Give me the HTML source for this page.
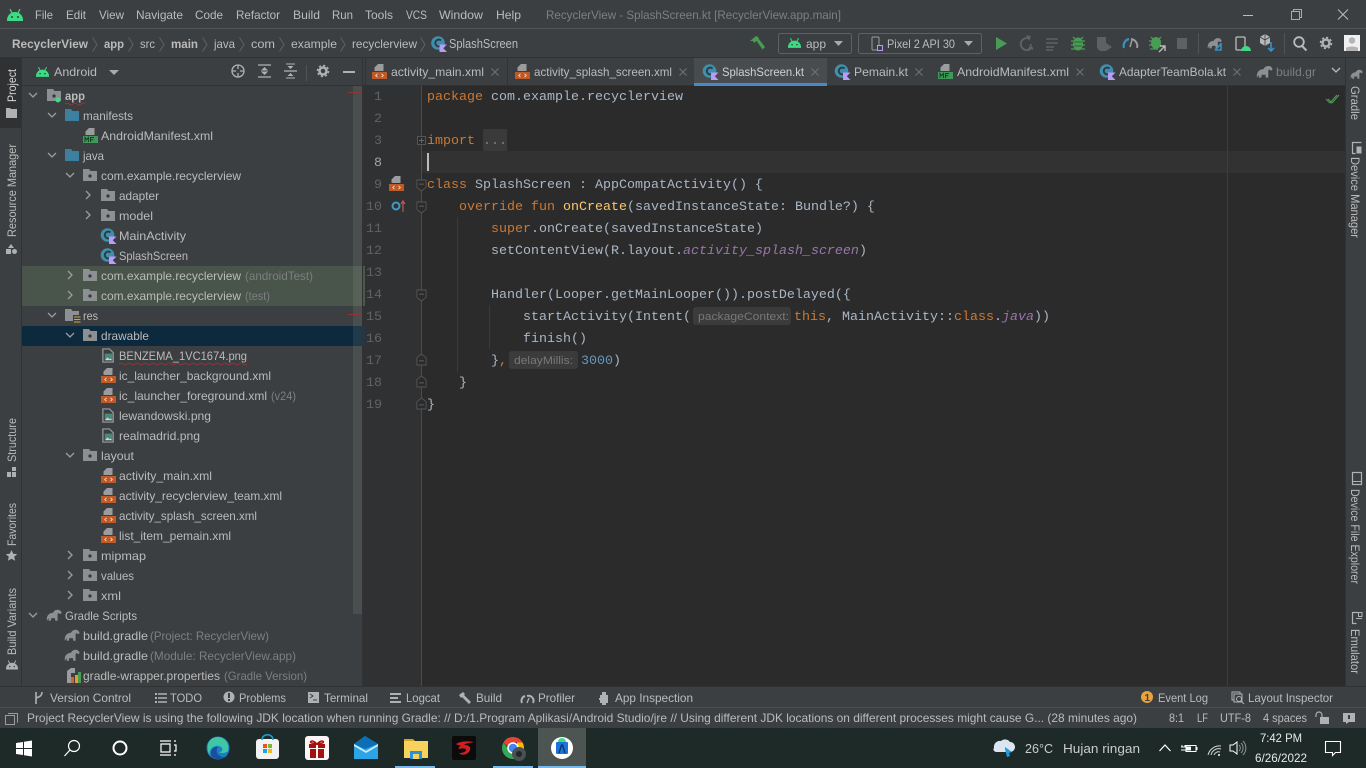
<!DOCTYPE html>
<html><head><meta charset="utf-8"><title>RecyclerView</title>
<style>
html,body{margin:0;padding:0;background:#3c3f41;overflow:hidden}
svg{display:block;position:absolute;left:0;top:0}
text{font-family:"Liberation Sans",sans-serif;font-size:12px;fill:#bbbbbb;white-space:pre}
.b{font-weight:bold}
.g{fill:#7d7f81}
.m{font-family:"Liberation Mono",monospace;font-size:13.333px;fill:#a9b7c6}
.k{fill:#cc7832}.f{fill:#ffc66d}.n{fill:#6897bb}.p{fill:#9876aa;font-style:italic}
.ln{font-family:"Liberation Mono",monospace;font-size:13.333px;fill:#606366;text-anchor:end}
.h{font-size:11px;fill:#787878}
.w{fill:#e4e6e6}
</style></head><body>
<svg width="1366" height="768" viewBox="0 0 1366 768" xmlns="http://www.w3.org/2000/svg">
<defs>
<symbol id="droid" viewBox="0 0 16 12"><path d="M0 11a8 8 0 0 1 16 0v1H0z" fill="currentColor"/><path d="M3 0l2 4M13 0l-2 4" stroke="currentColor" stroke-width="1.200"/><circle cx="5" cy="8" r="1" fill="#3c3f41"/><circle cx="11" cy="8" r="1" fill="#3c3f41"/></symbol>
<symbol id="kt" viewBox="0 0 16 16"><circle cx="7" cy="7" r="6.800" fill="#3f8fae"/><path d="M10 4.500A3.400 3.400 0 1 0 10 9.500" fill="none" stroke="#2f3a40" stroke-width="1.900"/><path d="M8.500 8.500H16l-3.700 3.700L16 16H8.500z" fill="#b99bf8"/></symbol>
<symbol id="pk" viewBox="0 0 14 12"><path d="M0 0h6l1.500 2H14v10H0z" fill="#8c9093"/><circle cx="7" cy="7" r="1.600" fill="#35383a"/></symbol>
<symbol id="bf" viewBox="0 0 14 12"><path d="M0 0h6l1.500 2H14v10H0z" fill="#3d7f9e"/></symbol>
<symbol id="xml" viewBox="0 0 15 15"><path d="M6 0h5.500v7H2.500V3.500z" fill="#9a9c9e"/><rect x="0" y="8" width="15" height="7" fill="#bf5a27"/><path d="M5.500 9.800l-1.800 1.700 1.800 1.700M9.500 9.800l1.800 1.700-1.800 1.700" fill="none" stroke="#e8d8cc" stroke-width=".9"/></symbol>
<symbol id="mf" viewBox="0 0 15 15"><path d="M6 0h5.500v7H2.500V3.500z" fill="#9a9c9e"/><rect x="0" y="8" width="15" height="7" fill="#3f9a5a"/><path d="M2 14v-4.500l1.700 2.200 1.700-2.200V14M7.500 14V9.500h3.500M7.500 11.800h2.800" fill="none" stroke="#1f3b28" stroke-width="1"/></symbol>
<symbol id="img" viewBox="0 0 16 16"><path d="M2 1h7l4 4v10H2z" fill="none" stroke="#9a9c9e" stroke-width="1.300"/><rect x="4" y="6" width="8" height="7" fill="#4a8a78"/><path d="M4 13l3-3 2 2 1-1 2 2z" fill="#c7d9d0"/></symbol>
<symbol id="gr" viewBox="0 0 18 13"><path d="M1 13C0 7 4 4 8 4c1-3 5-4 7-3 2 1 3 3 2 4-1 1-2 0-2.500-.5C13 4 13 6 13 8v5h-2.500L10 10H6l-.5 3H3v-3z" fill="#8c9093"/></symbol>
<symbol id="res" viewBox="0 0 16 16"><path d="M0 0h6l1.500 2H14v9H8v1H0z" fill="#8c9093"/><rect x="8" y="6" width="8" height="9" fill="#3c3f41"/><path d="M9 8h6.500M9 10.500h6.500M9 13h6.500" stroke="#e0a030" stroke-width="1.100"/></symbol>
<symbol id="fold" viewBox="0 0 12 14"><path d="M1 1h10v8l-5 4-5-4z" fill="#2b2b2b" stroke="#555" stroke-width="1"/><path d="M3.500 5.500h5" stroke="#666" stroke-width="1"/></symbol>
<symbol id="foldu" viewBox="0 0 12 14"><path d="M1 13h10V5L6 1 1 5z" fill="#2b2b2b" stroke="#555" stroke-width="1"/><path d="M3.500 8.500h5" stroke="#666" stroke-width="1"/></symbol>
<symbol id="cd" viewBox="0 0 10 10"><path d="M1 3l4 4 4-4" fill="none" stroke="#9a9d9f" stroke-width="1.300"/></symbol>
<symbol id="cr" viewBox="0 0 10 10"><path d="M3 1l4 4-4 4" fill="none" stroke="#9a9d9f" stroke-width="1.300"/></symbol>
<symbol id="x" viewBox="0 0 10 10"><path d="M1.500 1.500l7 7M8.500 1.500l-7 7" stroke="#6e7072" stroke-width="1.100"/></symbol>
<symbol id="sep" viewBox="0 0 6 15"><path d="M.5.500l4.500 7-4.500 7" fill="none" stroke="#5f6264" stroke-width="1"/></symbol>
</defs>

<!-- base -->
<rect width="1366" height="768" fill="#3c3f41"/>
<rect x="0" y="28" width="1366" height="1" fill="#515355"/>
<rect x="0" y="57" width="1366" height="1" fill="#323232"/>

<!-- title bar -->
<g color="#3ddc84"><use href="#droid" x="7" y="9" width="16" height="12"/></g>
<text x="35" y="19" textLength="18" lengthAdjust="spacingAndGlyphs">File</text>
<text x="66" y="19" textLength="20" lengthAdjust="spacingAndGlyphs">Edit</text>
<text x="99" y="19" textLength="25" lengthAdjust="spacingAndGlyphs">View</text>
<text x="136" y="19" textLength="47" lengthAdjust="spacingAndGlyphs">Navigate</text>
<text x="195" y="19" textLength="28" lengthAdjust="spacingAndGlyphs">Code</text>
<text x="236" y="19" textLength="44" lengthAdjust="spacingAndGlyphs">Refactor</text>
<text x="293" y="19" textLength="27" lengthAdjust="spacingAndGlyphs">Build</text>
<text x="332" y="19" textLength="21" lengthAdjust="spacingAndGlyphs">Run</text>
<text x="365" y="19" textLength="28" lengthAdjust="spacingAndGlyphs">Tools</text>
<text x="406" y="19" textLength="21" lengthAdjust="spacingAndGlyphs">VCS</text>
<text x="439" y="19" textLength="44" lengthAdjust="spacingAndGlyphs">Window</text>
<text x="496" y="19" textLength="25" lengthAdjust="spacingAndGlyphs">Help</text>
<text x="546" y="19" textLength="295" lengthAdjust="spacingAndGlyphs" class="g">RecyclerView - SplashScreen.kt [RecyclerView.app.main]</text>
<rect x="1243" y="15" width="10" height="1" fill="#bbb"/>
<path d="M1291.500 11.500h8v8h-8zM1293.500 11.500v-2h8v8h-2" fill="none" stroke="#aaa"/>
<path d="M1338 9.500l10 10M1348 9.500l-10 10" stroke="#bbb" stroke-width="1"/>

<!-- breadcrumb -->
<text x="12" y="48" class="b" textLength="76" lengthAdjust="spacingAndGlyphs">RecyclerView</text>
<use href="#sep" x="92" y="37" width="6" height="15"/>
<text x="104" y="48" class="b" textLength="20" lengthAdjust="spacingAndGlyphs">app</text>
<use href="#sep" x="128" y="37" width="6" height="15"/>
<text x="140" y="48" textLength="15" lengthAdjust="spacingAndGlyphs">src</text>
<use href="#sep" x="159" y="37" width="6" height="15"/>
<text x="171" y="48" class="b" textLength="27" lengthAdjust="spacingAndGlyphs">main</text>
<use href="#sep" x="202" y="37" width="6" height="15"/>
<text x="214" y="48" textLength="21" lengthAdjust="spacingAndGlyphs">java</text>
<use href="#sep" x="239" y="37" width="6" height="15"/>
<text x="251" y="48" textLength="24" lengthAdjust="spacingAndGlyphs">com</text>
<use href="#sep" x="279" y="37" width="6" height="15"/>
<text x="291" y="48" textLength="46" lengthAdjust="spacingAndGlyphs">example</text>
<use href="#sep" x="340" y="37" width="6" height="15"/>
<text x="352" y="48" textLength="65" lengthAdjust="spacingAndGlyphs">recyclerview</text>
<use href="#sep" x="420" y="37" width="6" height="15"/>
<use href="#kt" x="431" y="36" width="16" height="16"/>
<text x="449" y="48" textLength="69" lengthAdjust="spacingAndGlyphs" style="font-size:12.500px">SplashScreen</text>

<!-- toolbar -->
<path d="M750 41l6-5 2 1 1 2-5 4-1-2zM756 40l2-2 7 9-2.500 2.500z" fill="#499c54"/>
<rect x="778.500" y="33.500" width="73" height="20" rx="2" fill="none" stroke="#5e6163"/>
<g color="#3ddc84"><use href="#droid" x="788" y="38" width="13" height="10"/></g>
<text x="806" y="48" textLength="20" lengthAdjust="spacingAndGlyphs">app</text>
<path d="M834 41h9l-4.500 5z" fill="#aaa"/>
<rect x="858.500" y="33.500" width="123" height="20" rx="2" fill="none" stroke="#5e6163"/>
<rect x="872" y="37" width="7" height="13" rx="1" fill="none" stroke="#9a9c9e"/>
<rect x="877.500" y="45.500" width="5" height="5" fill="#3c3f41" stroke="#b99bf8"/>
<text x="887" y="48" textLength="68" lengthAdjust="spacingAndGlyphs">Pixel 2 API 30</text>
<path d="M964 41h9l-4.500 5z" fill="#aaa"/>
<path d="M996 37l11 6.500-11 6.500z" fill="#499c54"/>
<path d="M1030 39a6 6 0 1 0 2 8" fill="none" stroke="#5e6163" stroke-width="2"/><path d="M1026 35l5 1-2 5z" fill="#5e6163"/><text x="1028" y="50" style="font-size:8px;fill:#6a6d6f">A</text>
<path d="M1046 39h12M1046 43h12M1046 47h8M1046 50h7" stroke="#5e6163" stroke-width="1.500"/>
<ellipse cx="1078" cy="44" rx="5" ry="6.500" fill="#499c54"/><path d="M1073 37l2 2M1083 37l-2 2M1071 41h14M1071 45h14M1071 49h14" stroke="#499c54" stroke-width="1.300"/><path d="M1074 42h8M1074 46h8" stroke="#35603d" stroke-width="1"/>
<path d="M1097 37h9v14h-6l-3-3z" fill="#5e6163"/><path d="M1106 43l6 4-6 4z" fill="#5e6163"/>
<path d="M1124 48a7 7 0 0 1 5-9" fill="none" stroke="#3592c4" stroke-width="2.200"/><path d="M1131 39a7 7 0 0 1 6 9" fill="none" stroke="#9a9c9e" stroke-width="2"/><path d="M1130 47l2-7" stroke="#9a9c9e" stroke-width="1.500"/>
<ellipse cx="1156" cy="43" rx="5" ry="6" fill="#499c54"/><path d="M1151 37l2 2M1161 37l-2 2M1149 41h12M1149 45h12M1150 49h8" stroke="#499c54" stroke-width="1.300"/><path d="M1160 46h5v5M1165 46l-6 6" stroke="#bbb" stroke-width="1.400" fill="none"/>
<rect x="1177" y="38" width="10" height="11" fill="#5e6163"/>
<rect x="1198" y="33" width="1" height="21" fill="#515355"/>
<use href="#gr" x="1207" y="37" width="15" height="12"/><path d="M1221 43v7h-6M1215 50l6-6" stroke="#3592c4" stroke-width="1.600" fill="none"/>
<rect x="1236" y="37" width="9" height="13" rx="1" fill="none" stroke="#bbb" stroke-width="1.300"/><path d="M1241 51a5 5 0 0 1 10 0z" fill="#3ddc84"/>
<path d="M1260 37l5-3 5 3v6l-5 3-5-3z" fill="#b5b7b9"/><path d="M1265 34v12M1260 37l5 3 5-3" stroke="#3c3f41" stroke-width=".8" fill="none"/><path d="M1271 42v9M1268 48l3 3 3-3" stroke="#3592c4" stroke-width="1.600" fill="none"/>
<rect x="1284" y="33" width="1" height="21" fill="#515355"/>
<circle cx="1299" cy="42" r="4.800" fill="none" stroke="#bbb" stroke-width="1.800"/><path d="M1302 46l4.500 4.500" stroke="#bbb" stroke-width="2"/>
<circle cx="1326" cy="43" r="3.500" fill="none" stroke="#afb1b3" stroke-width="2.500"/><circle cx="1326" cy="43" r="5.500" fill="none" stroke="#afb1b3" stroke-width="1.500" stroke-dasharray="2.200 2.100"/>
<rect x="1344" y="35" width="16" height="16" fill="#f0f0f0"/><circle cx="1352" cy="40.500" r="3.200" fill="#b4b4b4"/><path d="M1346 51v-3c2-2 10-2 12 0v3z" fill="#b4b4b4"/>

<!-- left strip -->
<rect x="0" y="58" width="21" height="70" fill="#2f3132"/>
<rect x="21" y="58" width="1" height="628" fill="#323232"/>
<text transform="translate(16 102) rotate(-90)" textLength="33" lengthAdjust="spacingAndGlyphs" style="fill:#d8d8d8">Project</text>
<path d="M6 108h4l1 1h6v9H6z" fill="#afb1b3"/>
<text transform="translate(16 237) rotate(-90)" textLength="93" lengthAdjust="spacingAndGlyphs">Resource Manager</text>
<path d="M11 244l3 4H8zM6 249h5v5H6z" fill="#afb1b3"/><circle cx="14.500" cy="251.500" r="2.500" fill="#afb1b3"/>
<text transform="translate(16 462) rotate(-90)" textLength="44" lengthAdjust="spacingAndGlyphs">Structure</text>
<path d="M12 467h4v4h-4zM7 472h4v5H7zM12 472h4v5h-4z" fill="#afb1b3"/>
<text transform="translate(16 546) rotate(-90)" textLength="43" lengthAdjust="spacingAndGlyphs">Favorites</text>
<path d="M11.500 550l1.700 3.700 4 .4-3 2.700.9 4-3.600-2.100-3.600 2.100.9-4-3-2.700 4-.4z" fill="#afb1b3"/>
<text transform="translate(16 655) rotate(-90)" textLength="67" lengthAdjust="spacingAndGlyphs">Build Variants</text>
<g color="#afb1b3"><use href="#droid" x="6" y="660" width="12" height="10"/></g>

<!-- project panel header -->
<g color="#3ddc84"><use href="#droid" x="36" y="67" width="13" height="10"/></g>
<text x="54" y="76" textLength="43" lengthAdjust="spacingAndGlyphs">Android</text>
<path d="M109 70h10l-5 5z" fill="#aaa"/>
<circle cx="238" cy="71" r="6" fill="none" stroke="#afb1b3" stroke-width="1.300"/><path d="M238 65v12M232 71h12" stroke="#afb1b3" stroke-width="1.300"/><circle cx="238" cy="71" r="2" fill="#3c3f41"/>
<path d="M258 65h13M258 77h13" stroke="#afb1b3" stroke-width="1.300"/><path d="M264.500 67l-3 3h6zM264.500 75l-3-3h6z" fill="#afb1b3"/><path d="M261 71h7" stroke="#afb1b3"/>
<path d="M284 71h13" stroke="#afb1b3" stroke-width="1.300"/><path d="M290.500 69l-3-3h6zM290.500 73l-3 3h6z" fill="#afb1b3"/><path d="M286 78h9M286 64h9" stroke="#afb1b3" stroke-width="1"/>
<rect x="306" y="65" width="1" height="16" fill="#515355"/>
<circle cx="323" cy="71" r="3.500" fill="none" stroke="#afb1b3" stroke-width="2.500"/><circle cx="323" cy="71" r="5.500" fill="none" stroke="#afb1b3" stroke-width="1.500" stroke-dasharray="2.200 2.100"/>
<rect x="343" y="71" width="12" height="2" fill="#afb1b3"/>
<rect x="22" y="85" width="341" height="1" fill="#323232"/>

<!-- tree rows -->
<rect x="22" y="266" width="340" height="40" fill="#49544a"/>
<rect x="22" y="326" width="340" height="20" fill="#0d293e"/>
<rect x="353" y="86" width="9" height="528" fill="#fff" fill-opacity=".08"/>
<rect x="348" y="92" width="14" height="1" fill="#8a3737"/>
<rect x="348" y="314" width="14" height="1" fill="#8a3737"/>
<rect x="362" y="58" width="1" height="628" fill="#323232"/>

<use href="#cd" x="28" y="90" width="10" height="10"/>
<use href="#pk" x="47" y="89" width="14" height="12"/><circle cx="58" cy="100" r="2.500" fill="#3ddc84"/>
<text x="65" y="100" class="b" textLength="20" lengthAdjust="spacingAndGlyphs">app</text>
<path d="M65 104q2-2 4 0t4 0 4 0 4 0 4 0" stroke="#a33" fill="none" stroke-width=".8"/>
<use href="#cd" x="47" y="110" width="10" height="10"/><use href="#bf" x="65" y="109" width="14" height="12"/>
<text x="83" y="120" textLength="50" lengthAdjust="spacingAndGlyphs">manifests</text>
<use href="#mf" x="83" y="128" width="15" height="15"/>
<text x="101" y="140" textLength="112" lengthAdjust="spacingAndGlyphs">AndroidManifest.xml</text>
<use href="#cd" x="47" y="150" width="10" height="10"/><use href="#bf" x="65" y="149" width="14" height="12"/>
<text x="83" y="160" textLength="21" lengthAdjust="spacingAndGlyphs">java</text>
<use href="#cd" x="65" y="170" width="10" height="10"/><use href="#pk" x="83" y="169" width="14" height="12"/>
<text x="101" y="180" textLength="140" lengthAdjust="spacingAndGlyphs">com.example.recyclerview</text>
<use href="#cr" x="83" y="190" width="10" height="10"/><use href="#pk" x="101" y="189" width="14" height="12"/>
<text x="119" y="200" textLength="40" lengthAdjust="spacingAndGlyphs">adapter</text>
<use href="#cr" x="83" y="210" width="10" height="10"/><use href="#pk" x="101" y="209" width="14" height="12"/>
<text x="119" y="220" textLength="34" lengthAdjust="spacingAndGlyphs">model</text>
<use href="#kt" x="100.500" y="228" width="16" height="16"/>
<text x="119" y="240" textLength="67" lengthAdjust="spacingAndGlyphs">MainActivity</text>
<use href="#kt" x="100.500" y="248" width="16" height="16"/>
<text x="119" y="260" textLength="69" lengthAdjust="spacingAndGlyphs">SplashScreen</text>
<use href="#cr" x="65" y="270" width="10" height="10"/><use href="#pk" x="83" y="269" width="14" height="12"/>
<text x="101" y="280" textLength="140" lengthAdjust="spacingAndGlyphs">com.example.recyclerview</text>
<text x="245" y="280" class="g" textLength="68" lengthAdjust="spacingAndGlyphs">(androidTest)</text>
<use href="#cr" x="65" y="290" width="10" height="10"/><use href="#pk" x="83" y="289" width="14" height="12"/>
<text x="101" y="300" textLength="140" lengthAdjust="spacingAndGlyphs">com.example.recyclerview</text>
<text x="245" y="300" class="g" textLength="25" lengthAdjust="spacingAndGlyphs">(test)</text>
<use href="#cd" x="47" y="310" width="10" height="10"/><use href="#res" x="65" y="309" width="16" height="16"/>
<text x="83" y="320" textLength="15" lengthAdjust="spacingAndGlyphs">res</text>
<use href="#cd" x="65" y="330" width="10" height="10"/><use href="#pk" x="83" y="329" width="14" height="12"/>
<text x="101" y="340" textLength="48" lengthAdjust="spacingAndGlyphs">drawable</text>
<use href="#img" x="101" y="348" width="15" height="15"/>
<text x="119" y="360" textLength="128" lengthAdjust="spacingAndGlyphs">BENZEMA_1VC1674.png</text>
<path d="M119 364q2-2 4 0t4 0 4 0 4 0 4 0 4 0 4 0 4 0 4 0 4 0 4 0 4 0 4 0 4 0 4 0 4 0 4 0 4 0 4 0 4 0 4 0 4 0 4 0 4 0 4 0 4 0 4 0 4 0 4 0 4 0 4 0 4 0" stroke="#a33" fill="none" stroke-width=".7"/>
<use href="#xml" x="101" y="368" width="15" height="15"/>
<text x="119" y="380" textLength="152" lengthAdjust="spacingAndGlyphs">ic_launcher_background.xml</text>
<use href="#xml" x="101" y="388" width="15" height="15"/>
<text x="119" y="400" textLength="148" lengthAdjust="spacingAndGlyphs">ic_launcher_foreground.xml</text>
<text x="271" y="400" class="g" textLength="25" lengthAdjust="spacingAndGlyphs">(v24)</text>
<use href="#img" x="101" y="408" width="15" height="15"/>
<text x="119" y="420" textLength="92" lengthAdjust="spacingAndGlyphs">lewandowski.png</text>
<use href="#img" x="101" y="428" width="15" height="15"/>
<text x="119" y="440" textLength="81" lengthAdjust="spacingAndGlyphs">realmadrid.png</text>
<use href="#cd" x="65" y="450" width="10" height="10"/><use href="#pk" x="83" y="449" width="14" height="12"/>
<text x="101" y="460" textLength="33" lengthAdjust="spacingAndGlyphs">layout</text>
<use href="#xml" x="101" y="468" width="15" height="15"/>
<text x="119" y="480" textLength="93" lengthAdjust="spacingAndGlyphs">activity_main.xml</text>
<use href="#xml" x="101" y="488" width="15" height="15"/>
<text x="119" y="500" textLength="163" lengthAdjust="spacingAndGlyphs">activity_recyclerview_team.xml</text>
<use href="#xml" x="101" y="508" width="15" height="15"/>
<text x="119" y="520" textLength="138" lengthAdjust="spacingAndGlyphs">activity_splash_screen.xml</text>
<use href="#xml" x="101" y="528" width="15" height="15"/>
<text x="119" y="540" textLength="112" lengthAdjust="spacingAndGlyphs">list_item_pemain.xml</text>
<use href="#cr" x="65" y="550" width="10" height="10"/><use href="#pk" x="83" y="549" width="14" height="12"/>
<text x="101" y="560" textLength="45" lengthAdjust="spacingAndGlyphs">mipmap</text>
<use href="#cr" x="65" y="570" width="10" height="10"/><use href="#pk" x="83" y="569" width="14" height="12"/>
<text x="101" y="580" textLength="33" lengthAdjust="spacingAndGlyphs">values</text>
<use href="#cr" x="65" y="590" width="10" height="10"/><use href="#pk" x="83" y="589" width="14" height="12"/>
<text x="101" y="600" textLength="20" lengthAdjust="spacingAndGlyphs">xml</text>
<use href="#cd" x="28" y="610" width="10" height="10"/><use href="#gr" x="46" y="609" width="16" height="12"/>
<text x="65" y="620" textLength="72" lengthAdjust="spacingAndGlyphs">Gradle Scripts</text>
<use href="#gr" x="64" y="629" width="16" height="12"/>
<text x="83" y="640" textLength="65" lengthAdjust="spacingAndGlyphs">build.gradle</text>
<text x="150" y="640" class="g" textLength="119" lengthAdjust="spacingAndGlyphs">(Project: RecyclerView)</text>
<use href="#gr" x="64" y="649" width="16" height="12"/>
<text x="83" y="660" textLength="65" lengthAdjust="spacingAndGlyphs">build.gradle</text>
<text x="150" y="660" class="g" textLength="146" lengthAdjust="spacingAndGlyphs">(Module: RecyclerView.app)</text>
<path d="M71 668h4v5h-4zM67 671l4-3v3zM67 671h4v12h-4z" fill="#9a9c9e"/><rect x="71" y="677" width="3" height="6" fill="#d9642a"/><rect x="75" y="675" width="3" height="8" fill="#e0a030"/><rect x="78" y="672" width="3" height="11" fill="#499c54"/>
<text x="83" y="680" textLength="137" lengthAdjust="spacingAndGlyphs">gradle-wrapper.properties</text>
<text x="224" y="680" class="g" textLength="83" lengthAdjust="spacingAndGlyphs">(Gradle Version)</text>

<!-- editor tabs -->
<rect x="694" y="58" width="133" height="25" fill="#494c4e"/>
<rect x="694" y="83" width="133" height="3" fill="#4a88c7"/>
<use href="#xml" x="372" y="64" width="15" height="15"/>
<text x="391" y="76" textLength="93" lengthAdjust="spacingAndGlyphs">activity_main.xml</text>
<use href="#x" x="490" y="67" width="10" height="10"/>
<rect x="507" y="58" width="1" height="28" fill="#323232"/><rect x="365" y="58" width="1" height="28" fill="#323232"/>
<use href="#xml" x="515" y="64" width="15" height="15"/>
<text x="534" y="76" textLength="138" lengthAdjust="spacingAndGlyphs">activity_splash_screen.xml</text>
<use href="#x" x="678" y="67" width="10" height="10"/>
<use href="#kt" x="702.500" y="64" width="16" height="16"/>
<text x="722" y="76" textLength="82" lengthAdjust="spacingAndGlyphs" style="fill:#d0d0d0">SplashScreen.kt</text>
<use href="#x" x="810" y="67" width="10" height="10"/>
<use href="#kt" x="834.500" y="64" width="16" height="16"/>
<text x="854" y="76" textLength="54" lengthAdjust="spacingAndGlyphs">Pemain.kt</text>
<use href="#x" x="914" y="67" width="10" height="10"/>
<use href="#mf" x="938" y="64" width="15" height="15"/>
<text x="957" y="76" textLength="112" lengthAdjust="spacingAndGlyphs">AndroidManifest.xml</text>
<use href="#x" x="1075" y="67" width="10" height="10"/>
<use href="#kt" x="1099.500" y="64" width="16" height="16"/>
<text x="1119" y="76" textLength="107" lengthAdjust="spacingAndGlyphs">AdapterTeamBola.kt</text>
<use href="#x" x="1232" y="67" width="10" height="10"/>
<use href="#gr" x="1256" y="65" width="17" height="13"/>
<text x="1276" y="76" textLength="40" lengthAdjust="spacingAndGlyphs" class="g">build.gr</text>
<path d="M1332 68l4 4 4-4" fill="none" stroke="#bbb" stroke-width="1.300"/>
<rect x="363" y="85" width="331" height="1" fill="#323232"/><rect x="827" y="85" width="518" height="1" fill="#323232"/>

<!-- editor -->
<rect x="363" y="86" width="982" height="600" fill="#2b2b2b"/>
<rect x="363" y="86" width="58" height="600" fill="#2f3133"/>
<rect x="422" y="151" width="923" height="22" fill="#323232"/>
<rect x="421" y="86" width="1" height="600" fill="#4a4c4e"/>
<rect x="1227" y="86" width="1" height="600" fill="#3d3d3d"/>
<rect x="363" y="266" width="2" height="40" fill="#4a5a4a"/><rect x="363" y="326" width="2" height="20" fill="#1b3a52"/>
<rect x="457" y="217" width="1" height="155" fill="#3b3b3b"/>
<rect x="489" y="305" width="1" height="44" fill="#3b3b3b"/>
<path d="M1326 99l4 4 7-8M1328 99l4 4 7-8" fill="none" stroke="#499c54" stroke-width="1.100"/>

<text class="ln" x="382" y="100">1</text>
<text class="ln" x="382" y="122">2</text>
<text class="ln" x="382" y="144">3</text>
<text class="ln" x="382" y="166" style="fill:#a4a3a3">8</text>
<text class="ln" x="382" y="188">9</text>
<text class="ln" x="382" y="210">10</text>
<text class="ln" x="382" y="232">11</text>
<text class="ln" x="382" y="254">12</text>
<text class="ln" x="382" y="276">13</text>
<text class="ln" x="382" y="298">14</text>
<text class="ln" x="382" y="320">15</text>
<text class="ln" x="382" y="342">16</text>
<text class="ln" x="382" y="364">17</text>
<text class="ln" x="382" y="386">18</text>
<text class="ln" x="382" y="408">19</text>

<use href="#xml" x="389" y="176" width="15" height="15"/>
<circle cx="396" cy="206" r="3.500" fill="none" stroke="#3d9bc4" stroke-width="2"/><path d="M403 212v-10M401 204l2-3 2 3" stroke="#c75450" stroke-width="1.200" fill="none"/>

<path d="M417.500 136.500h8v8h-8z" fill="#2b2b2b" stroke="#555"/><path d="M419 140.500h5M421.500 138v5" stroke="#666"/>
<use href="#fold" x="416" y="179" width="11" height="13"/>
<use href="#fold" x="416" y="201" width="11" height="13"/>
<use href="#fold" x="416" y="289" width="11" height="13"/>
<use href="#foldu" x="416" y="353" width="11" height="13"/>
<use href="#foldu" x="416" y="375" width="11" height="13"/>
<use href="#foldu" x="416" y="397" width="11" height="13"/>

<text class="m" x="427" y="100"><tspan class="k">package</tspan> com.example.recyclerview</text>
<text class="m k" x="427" y="144" style="fill:#cc7832">import</text>
<rect x="483" y="129" width="24" height="22" fill="#3a3a3a"/>
<text class="m" x="483" y="144" style="fill:#808080">...</text>
<rect x="427" y="153" width="2" height="18" fill="#bbb"/>
<text class="m" x="427" y="188"><tspan class="k">class</tspan> SplashScreen : AppCompatActivity() {</text>
<text class="m" x="459" y="210"><tspan class="k">override fun</tspan> <tspan class="f">onCreate</tspan>(savedInstanceState: Bundle?) {</text>
<text class="m" x="491" y="232"><tspan class="k">super</tspan>.onCreate(savedInstanceState)</text>
<text class="m" x="491" y="254">setContentView(R.layout.<tspan class="p">activity_splash_screen</tspan>)</text>
<text class="m" x="491" y="298">Handler(Looper.getMainLooper()).postDelayed({</text>
<text class="m" x="523" y="320">startActivity(Intent(</text>
<rect x="693" y="307" width="98" height="18" rx="3" fill="#3b3b3b"/>
<text class="h" x="698" y="320" textLength="91" lengthAdjust="spacingAndGlyphs">packageContext:</text>
<text class="m" x="794" y="320"><tspan class="k">this</tspan>, MainActivity::<tspan class="k">class</tspan>.<tspan class="p">java</tspan>))</text>
<text class="m" x="523" y="342">finish()</text>
<text class="m" x="491" y="364">}<tspan class="k">,</tspan></text>
<rect x="509" y="351" width="69" height="18" rx="3" fill="#3b3b3b"/>
<text class="h" x="514" y="364" textLength="59" lengthAdjust="spacingAndGlyphs">delayMillis:</text>
<text class="m" x="581" y="364"><tspan class="n">3000</tspan>)</text>
<text class="m" x="459" y="386">}</text>
<text class="m" x="427" y="408">}</text>

<!-- right strip -->
<rect x="1345" y="58" width="1" height="628" fill="#323232"/>
<use href="#gr" x="1350" y="69" width="13" height="10"/>
<text transform="translate(1351 86) rotate(90)" textLength="34" lengthAdjust="spacingAndGlyphs">Gradle</text>
<path d="M1361.500 142.500h-9v11h3" fill="none" stroke="#afb1b3" stroke-width="1.200"/><rect x="1356.500" y="146.500" width="5" height="7" fill="#afb1b3"/>
<text transform="translate(1351 157) rotate(90)" textLength="81" lengthAdjust="spacingAndGlyphs">Device Manager</text>
<rect x="1352.500" y="472.500" width="9" height="12" fill="none" stroke="#afb1b3" stroke-width="1.200"/><rect x="1353" y="481" width="8" height="1" fill="#afb1b3"/>
<text transform="translate(1351 489) rotate(90)" textLength="95" lengthAdjust="spacingAndGlyphs">Device File Explorer</text>
<path d="M1358 612.500h-5.500v11h4" fill="none" stroke="#afb1b3" stroke-width="1.200"/><rect x="1358.500" y="612.500" width="3.500" height="4" fill="none" stroke="#afb1b3"/><rect x="1356" y="618" width="6" height="1" fill="#afb1b3"/>
<text transform="translate(1351 629) rotate(90)" textLength="45" lengthAdjust="spacingAndGlyphs">Emulator</text>

<!-- bottom tool windows -->
<rect x="0" y="686" width="1366" height="1" fill="#323232"/>
<rect x="0" y="707" width="1366" height="1" fill="#4b4d4f"/>
<path d="M36 692v12M42 692c0 4-3 5-6 6" fill="none" stroke="#afb1b3" stroke-width="1.600"/>
<text x="50" y="702" textLength="81" lengthAdjust="spacingAndGlyphs">Version Control</text>
<path d="M155 693h2v2h-2zM155 697h2v2h-2zM155 701h2v2h-2z" fill="#afb1b3"/><path d="M158 694h9M158 698h9M158 702h9" stroke="#afb1b3" stroke-width="1.600"/>
<text x="170" y="702" textLength="32" lengthAdjust="spacingAndGlyphs">TODO</text>
<circle cx="229" cy="697" r="5.500" fill="#afb1b3"/><rect x="228" y="693" width="2" height="5" fill="#3c3f41"/><rect x="228" y="699" width="2" height="2" fill="#3c3f41"/>
<text x="239" y="702" textLength="47" lengthAdjust="spacingAndGlyphs">Problems</text>
<rect x="308" y="692" width="11" height="11" fill="#afb1b3"/><path d="M310 694l3 2-3 2" fill="none" stroke="#3c3f41"/><path d="M313 700h4" stroke="#3c3f41"/>
<text x="324" y="702" textLength="44" lengthAdjust="spacingAndGlyphs">Terminal</text>
<path d="M390 693h11v2h-11zM390 697h8v2h-8zM390 701h11v2h-11z" fill="#afb1b3"/>
<text x="406" y="702" textLength="34" lengthAdjust="spacingAndGlyphs">Logcat</text>
<path d="M459 695l4-3 2 2-1 1 7 7-2 2-7-7-1 1z" fill="#afb1b3"/>
<text x="476" y="702" textLength="26" lengthAdjust="spacingAndGlyphs">Build</text>
<path d="M522 703a5 5 0 0 1 3-7" fill="none" stroke="#afb1b3" stroke-width="2"/><path d="M527 696a5 5 0 0 1 6 7" fill="none" stroke="#afb1b3" stroke-width="2"/><path d="M527 703l2-5" stroke="#afb1b3" stroke-width="1.300"/>
<text x="538" y="702" textLength="37" lengthAdjust="spacingAndGlyphs">Profiler</text>
<path d="M602 692h4v3h2v8h-2v2h-4v-2h-2v-3h-1v-2h1v-3h2z" fill="#afb1b3"/>
<text x="615" y="702" textLength="78" lengthAdjust="spacingAndGlyphs">App Inspection</text>
<circle cx="1147" cy="697" r="6" fill="#e8a33d"/><text x="1144.500" y="701" style="font-size:10px;fill:#3c3f41;font-weight:bold">1</text>
<text x="1158" y="702" textLength="50" lengthAdjust="spacingAndGlyphs">Event Log</text>
<rect x="1232" y="692" width="8" height="8" fill="none" stroke="#afb1b3"/><rect x="1234" y="694" width="8" height="8" fill="#3c3f41" stroke="#afb1b3"/><circle cx="1239" cy="699" r="2.500" fill="#3c3f41" stroke="#afb1b3"/><path d="M1241 701l3 3" stroke="#afb1b3"/>
<text x="1248" y="702" textLength="85" lengthAdjust="spacingAndGlyphs">Layout Inspector</text>

<!-- status bar -->
<rect x="5.500" y="715.500" width="9" height="9" fill="none" stroke="#9a9c9e"/><path d="M8 713.500h9.500v9" fill="none" stroke="#9a9c9e"/>
<text x="27" y="722" textLength="1110" lengthAdjust="spacingAndGlyphs">Project RecyclerView is using the following JDK location when running Gradle: // D:/1.Program Aplikasi/Android Studio/jre // Using different JDK locations on different processes might cause G... (28 minutes ago)</text>
<text x="1169" y="722" textLength="15" lengthAdjust="spacingAndGlyphs">8:1</text>
<text x="1197" y="722" textLength="11" lengthAdjust="spacingAndGlyphs">LF</text>
<text x="1220" y="722" textLength="31" lengthAdjust="spacingAndGlyphs">UTF-8</text>
<text x="1263" y="722" textLength="44" lengthAdjust="spacingAndGlyphs">4 spaces</text>
<rect x="1320" y="717" width="9" height="7" fill="#afb1b3"/><path d="M1322 717v-2a3 3 0 0 0-6 0v2" fill="none" stroke="#afb1b3" stroke-width="1.200"/>
<path d="M1343 713h12v9h-6l-3 2v-2h-3z" fill="#afb1b3"/><rect x="1348" y="715" width="2" height="4" fill="#3c3f41"/>

<!-- taskbar -->
<rect x="0" y="728" width="1366" height="40" fill="#1e2a27"/>
<path d="M16 743l7-1v6h-7zM24 741.800l8-1.300v7.500h-8zM16 749h7v6l-7-1zM24 749h8v7.500l-8-1.300z" fill="#fff"/>
<circle cx="74" cy="746" r="5.500" fill="none" stroke="#fff" stroke-width="1.200"/><path d="M70 750l-5.500 6" stroke="#fff" stroke-width="1.200"/>
<circle cx="120" cy="748" r="6.500" fill="none" stroke="#fff" stroke-width="2"/>
<path d="M160 741h11M160 755h11M161 744h9v8h-9zM174 741h2M174 745h2v6h-2M174 755h2" fill="none" stroke="#fff" stroke-width="1.200"/>
<circle cx="218" cy="748" r="11.500" fill="#1b7fc4"/><path d="M208 744c2-7 11-9 16-5 4 3 5 7 4 12-2 2-6 3-9 1 3 0 4-2 3-4-2-3-7-3-10 0-2 2-3 5-2 8-2-3-3-8-2-12z" fill="#3fc6a5"/><path d="M212 757c-3-6 1-11 6-10-2 3-2 7 2 9 3 2 6 1 8-1-3 4-11 6-16 2z" fill="#1a4f9c"/>
<rect x="256" y="739" width="23" height="20" rx="3" fill="#f2f2f2"/><path d="M262 740c0-7 11-7 11 0" fill="none" stroke="#1f9fd8" stroke-width="1.600"/>
<rect x="263" y="744" width="4" height="4" fill="#e8532b"/><rect x="268" y="744" width="4" height="4" fill="#7cb82f"/><rect x="263" y="749" width="4" height="4" fill="#1fa3e0"/><rect x="268" y="749" width="4" height="4" fill="#f5b81a"/>
<rect x="305" y="736" width="24" height="24" rx="3" fill="#fdf6f6"/><rect x="309" y="744" width="16" height="4" fill="#a51010"/><rect x="310" y="749" width="14" height="9" fill="#a51010"/><rect x="316" y="744" width="2" height="14" fill="#fdf6f6"/><path d="M317 744c-6-6-8-1-5-1zM317 744c6-6 8-1 5-1z" fill="none" stroke="#a51010" stroke-width="1.500"/>
<path d="M354 744l11-8 13 8v15h-24z" fill="#2ba5e6"/><path d="M354 744l11-8 13 8-13 5z" fill="#0d6db5"/><path d="M354 744l12 7 12-7v2l-12 7-12-7z" fill="#cfeefc"/>
<path d="M404 739h9l2 2h12v4h-23z" fill="#d9a21f"/><rect x="404" y="741" width="24" height="17" fill="#f7d25c"/><rect x="410" y="751" width="12" height="8" fill="#2d90d8"/><rect x="413" y="754" width="6" height="5" fill="#f7d25c"/>
<rect x="452" y="736" width="24" height="24" rx="2" fill="#0b0b0b"/><path d="M456 744c5-3 11-3 18-2-4 1-8 1-10 3 5 0 7 2 6 5-2 5-8 6-11 3 3 0 7-1 7-3 0-2-4-2-6-1-2 0-2-2 1-3-2-1-4-1-5-2z" fill="#cf1f25"/>
<path d="M513 737a11 11 0 0 1 9.500 5.500H513z" fill="#ea4335"/><path d="M503.500 742.500a11 11 0 0 1 9.500-5.500v5.500h-3l-1 5z" fill="#ea4335"/><path d="M503.500 742.500a11 11 0 0 0 9.500 16.500l3-5.500h-4z" fill="#34a853"/><path d="M522.500 742.500a11 11 0 0 1-9.500 16.500l4-8v-8.500z" fill="#fbbc05"/><circle cx="513" cy="748" r="5" fill="#4285f4" stroke="#fff" stroke-width="1.500"/><circle cx="519" cy="754" r="7" fill="#4a4f52"/><circle cx="519" cy="754" r="3" fill="#20262a"/>
<rect x="538" y="728" width="48" height="40" fill="#4c5552"/>
<circle cx="562" cy="748" r="11" fill="#fff"/><rect x="556" y="742" width="12" height="12" rx="1" fill="#1a73d9"/><path d="M558 742a4 4 0 0 1 8 0z" fill="#3ddc84"/><path d="M559 753l2.500-8h1l2.500 8" fill="none" stroke="#0c2d5a" stroke-width="1.200"/>
<rect x="395" y="766" width="40" height="2" fill="#76b9ed"/>
<rect x="493" y="766" width="40" height="2" fill="#76b9ed"/>
<rect x="538" y="766" width="48" height="2" fill="#76b9ed"/>

<path d="M994 748a6 6 0 0 1 7-7 6 6 0 0 1 9 1 5 5 0 0 1 4 8c-1 1-2 2-4 2h-14c-3-1-3-3-2-4z" fill="#dbe6f0"/><path d="M1005 747l7 5-3 1 1 3-3 1-2-8z" fill="#1f9de0"/>
<text x="1025" y="753" class="w" textLength="28" lengthAdjust="spacingAndGlyphs" style="font-size:13px;fill:#c9cccb">26°C</text>
<text x="1063" y="753" textLength="77" lengthAdjust="spacingAndGlyphs" style="font-size:13px;fill:#c9cccb">Hujan ringan</text>
<path d="M1159.500 751l5.500-6 5.500 6" fill="none" stroke="#fff" stroke-width="1.200"/>
<path d="M1182 745v2M1185 745v2M1181 747h6v3h-6M1187 749h2" fill="none" stroke="#fff" stroke-width="1"/><rect x="1186" y="745.500" width="10" height="6" fill="none" stroke="#fff" stroke-width="1"/><rect x="1187" y="746.500" width="4" height="4" fill="#fff"/><rect x="1196" y="747" width="1.500" height="3" fill="#fff"/>
<path d="M1208 755a12 12 0 0 1 13-9M1211 755a8 8 0 0 1 10-6M1214 755a5 5 0 0 1 6-3" fill="none" stroke="#d8d8d8" stroke-width="1"/><circle cx="1219" cy="755" r="1" fill="#fff"/>
<path d="M1230 745h3l4-3v12l-4-3h-3z" fill="none" stroke="#fff" stroke-width="1"/><path d="M1239 745a4 4 0 0 1 0 6M1241 743a7 7 0 0 1 0 10M1243 741a10 10 0 0 1 0 14" fill="none" stroke="#8f9594" stroke-width="1"/>
<text x="1260" y="742" textLength="42" lengthAdjust="spacingAndGlyphs" style="fill:#e8eaea">7:42 PM</text>
<text x="1255" y="762" textLength="52" lengthAdjust="spacingAndGlyphs" style="fill:#e8eaea">6/26/2022</text>
<path d="M1325.500 741.500h15v11h-5l-3 3v-3h-7z" fill="none" stroke="#fff" stroke-width="1.100"/>
</svg>
</body></html>
